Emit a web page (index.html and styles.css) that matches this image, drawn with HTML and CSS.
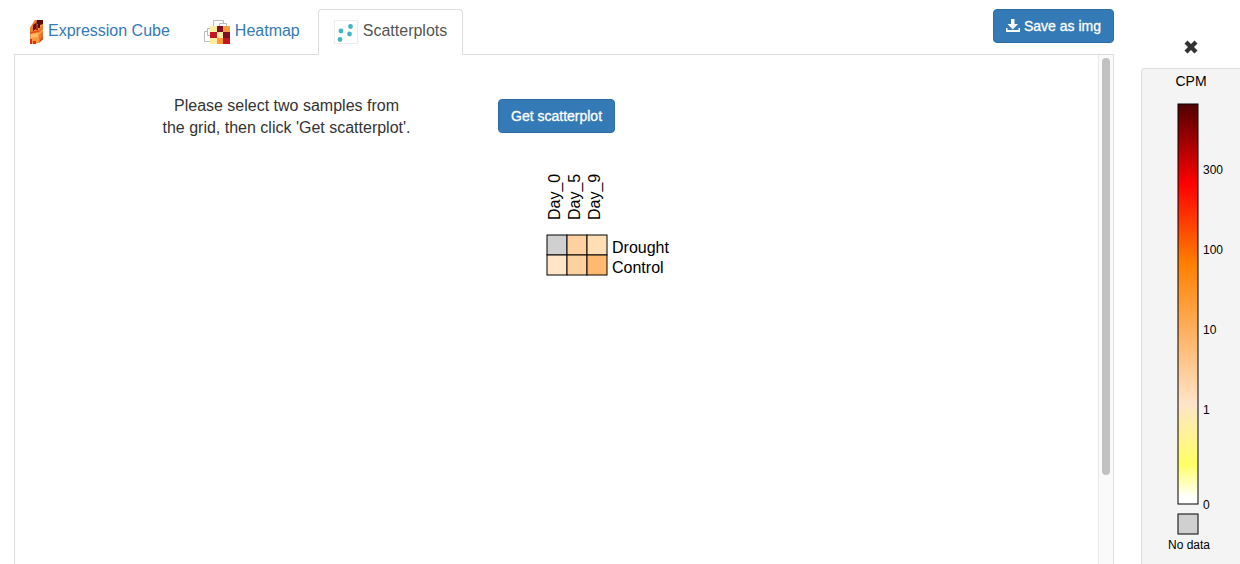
FILE: index.html
```html
<!DOCTYPE html>
<html lang="en">
<head>
<meta charset="utf-8">
<title>Scatterplots</title>
<link rel="stylesheet" href="styles.css">
</head>
<body>
<div class="app">
  <main class="viewer">
    <header class="toolbar">
      <nav class="tabs">
        <a class="tab" href="#cube">
          <svg width="13" height="24" viewBox="0 0 13 24" aria-hidden="true">
            <path d="M0 8 5 0H13V19L9 23 0 24Z" fill="#f7983f"/>
            <path d="M0 8 5 0H8L4 7V11L0 12Z" fill="#f0802c"/>
            <path d="M7 0H13V4L10 5V8H8V4L6 5Z" fill="#5a0a0c"/>
            <path d="M3 5 6 3V9L3 11Z" fill="#6d0d0f"/>
            <path d="M6 5H8V10H6Z" fill="#a83214"/>
            <path d="M9 9 13 5V19L9 23Z" fill="#e8752a"/>
            <path d="M0 12 9 10V12L0 14Z" fill="#e5501a"/>
            <path d="M1 14 8 13V17L1 18Z" fill="#ffb867"/>
            <path d="M0 19H2V24H0ZM3 21H6V24H3Z" fill="#e22f12"/>
            <path d="M9 13 13 9V11L9 15Z" fill="#f9a656"/>
            <path d="M10 20 13 16V19L10 22Z" fill="#d9481a"/>
          </svg>
          <span>Expression Cube</span>
        </a>
        <a class="tab" href="#heatmap">
          <svg width="26" height="24" viewBox="0 0 26 24" aria-hidden="true">
            <path d="M9.500 6V.5H19.500V3.500M15.500 6V3.500H22.500V6M6 8.500H3.500V15.500H6M3.500 11.500H.5V21.500H6" fill="none" stroke="#bbb"/>
            <path d="M6 6H26V24H6Z" fill="#ffeda0"/>
            <path d="M13 6H19V12H13ZM19 12H26V18H19Z" fill="#800f26"/>
            <path d="M19 6H26V12H19ZM13 12H19V18H13ZM13 18H19V24H13Z" fill="#fd9a42"/>
            <path d="M6 12H13V18H6ZM19 18H26V24H19Z" fill="#c4161c"/>
            <path d="M13 12H19V18H13Z" fill="#ffeda0"/>
          </svg>
          <span>Heatmap</span>
        </a>
        <a class="tab tab-active" href="#scatterplots" aria-current="page">
          <svg width="24" height="24" viewBox="0 0 24 24" aria-hidden="true">
            <path d="M.5.5H23.500V23.500H.5Z" fill="#fff" stroke="#ececec"/>
            <g fill="#45b4c6">
              <circle cx="16.500" cy="6.500" r="2.400"/>
              <circle cx="7" cy="11" r="2.400"/>
              <circle cx="15.500" cy="14" r="2.400"/>
              <circle cx="6" cy="19.500" r="2.400"/>
            </g>
          </svg>
          <span>Scatterplots</span>
        </a>
      </nav>
      <button class="btn" type="button">
        <svg width="14" height="14" viewBox="0 0 14 14" aria-hidden="true">
          <path d="M5 0H8.500V5H12L6.750 10.500 1.500 5H5Z" fill="#fff"/>
          <path d="M0 9H1.500V11H12.500V9H14V13H0Z" fill="#fff"/>
        </svg>
        <span>Save as img</span>
      </button>
    </header>
    <section class="panel">
      <div class="content">
        <p class="hint">Please select two samples from<br>the grid, then click 'Get scatterplot'.</p>
        <div class="picker">
          <button class="btn" type="button">Get scatterplot</button>
          <svg class="grid" width="200" height="112" viewBox="0 0 200 112" role="img" aria-label="Sample grid">
            <g transform="translate(49 68)" stroke="#000">
              <rect x="0" y="0" width="20" height="20" fill="#d0d0d0"/>
              <rect x="20" y="0" width="20" height="20" fill="#ffd1a1"/>
              <rect x="40" y="0" width="20" height="20" fill="#ffddb5"/>
              <rect x="0" y="20" width="20" height="20" fill="#ffe6c6"/>
              <rect x="20" y="20" width="20" height="20" fill="#ffd1a1"/>
              <rect x="40" y="20" width="20" height="20" fill="#ffba70"/>
            </g>
            <text transform="translate(62 53) rotate(-90)">Day_0</text>
            <text transform="translate(82 53) rotate(-90)">Day_5</text>
            <text transform="translate(102 53) rotate(-90)">Day_9</text>
            <text x="114" y="86">Drought</text>
            <text x="114" y="106">Control</text>
          </svg>
        </div>
      </div>
      <div class="track"><div class="thumb"></div></div>
    </section>
  </main>
  <aside class="side">
    <button class="close" type="button" aria-label="Close legend">
      <svg width="14" height="14" viewBox="0 0 14 14" aria-hidden="true">
        <path d="M3.500.5 7 4 10.500.5 13.500 3.500 10 7 13.500 10.500 10.500 13.500 7 10 3.500 13.500.5 10.500 4 7 .5 3.500Z" fill="#333"/>
      </svg>
    </button>
    <div class="legend">
      <svg width="98" height="490" viewBox="0 0 98 490" role="img" aria-label="CPM colour scale">
        <defs>
          <linearGradient id="scale" x1="0" y1="0" x2="0" y2="1">
            <stop offset="0" stop-color="#500000"/>
            <stop offset=".2" stop-color="#ff0000"/>
            <stop offset=".4" stop-color="#ff8000"/>
            <stop offset=".75" stop-color="#ffe4c8"/>
            <stop offset=".9" stop-color="#ffff66"/>
            <stop offset=".985" stop-color="#ffffff"/>
          </linearGradient>
        </defs>
        <text class="unit" x="49" y="17" text-anchor="middle">CPM</text>
        <rect x="36" y="35" width="20" height="400" fill="url(#scale)" stroke="#000"/>
        <text x="61" y="105">300</text>
        <text x="61" y="185">100</text>
        <text x="61" y="265">10</text>
        <text x="61" y="345">1</text>
        <text x="61" y="440">0</text>
        <rect x="36" y="445" width="20" height="20" fill="#d0d0d0" stroke="#000"/>
        <text x="47" y="480" text-anchor="middle">No data</text>
      </svg>
    </div>
  </aside>
</div>
</body>
</html>
```
FILE: styles.css
```css
* { box-sizing: border-box; }
body {
  margin: 0;
  background: #fff;
  color: #333;
  font: 16px/22px "Liberation Sans", Arial, sans-serif;
}
.app {
  display: flex;
  gap: 27px;
  height: 100vh;
  padding: 9px 0 0 14px;
  overflow: hidden;
}
.viewer {
  display: flex;
  flex: 1;
  flex-direction: column;
  min-width: 0;
}
.toolbar {
  display: flex;
  justify-content: space-between;
  align-items: flex-start;
  border-bottom: 1px solid #ddd;
}
.tabs {
  display: flex;
  gap: 2px;
  margin-bottom: -1px;
}
.tab {
  display: flex;
  align-items: flex-start;
  gap: 5px;
  height: 46px;
  padding: 10px 15px;
  border: 1px solid transparent;
  border-radius: 4px 4px 0 0;
  color: #337ab7;
  text-decoration: none;
}
.tab-active {
  background: #fff;
  border-color: #ddd #ddd #fff;
  color: #555;
}
.btn {
  display: inline-flex;
  align-items: center;
  gap: 4px;
  height: 34px;
  padding: 0 12px;
  border: 1px solid #2e6da4;
  border-radius: 4px;
  background: #337ab7;
  color: #fff;
  font: 14px/20px "Liberation Sans", Arial, sans-serif;
  -webkit-text-stroke: 0.3px #fff;
  cursor: pointer;
}
.panel {
  display: flex;
  flex: 1;
  min-height: 0;
  border: solid #ddd;
  border-width: 0 1px;
}
.content {
  display: grid;
  flex: 1;
  grid-template-columns: 483fr 600fr;
  padding-top: 44px;
}
.hint {
  margin: -4px 0 0;
  padding-left: 60px;
  text-align: center;
}
.picker {
  display: flex;
  flex-direction: column;
  align-items: flex-start;
  gap: 34px;
}
.grid { display: block; }
.grid text {
  fill: #000;
  font-size: 16px;
}
.track {
  width: 15px;
  padding: 3px;
  border-left: 1px solid #e8e8e8;
  background: #fafafa;
}
.thumb {
  width: 8px;
  height: 83%;
  border-radius: 4px;
  background: #c1c1c1;
}
.side {
  display: flex;
  flex-direction: column;
  width: 99px;
  padding-top: 31px;
}
.close {
  align-self: center;
  height: 28px;
  padding: 0;
  border: 0;
  background: none;
  line-height: 0;
  cursor: pointer;
}
.close svg { display: block; margin-bottom: 14px; }
.legend {
  flex: 1;
  border: solid #ddd;
  border-width: 1px 0 0 1px;
  border-radius: 4px 0 0 0;
  background: #f4f4f4;
}
.legend svg { display: block; }
.legend text {
  fill: #000;
  font-size: 12px;
}
.legend .unit { font-size: 14px; }
```
